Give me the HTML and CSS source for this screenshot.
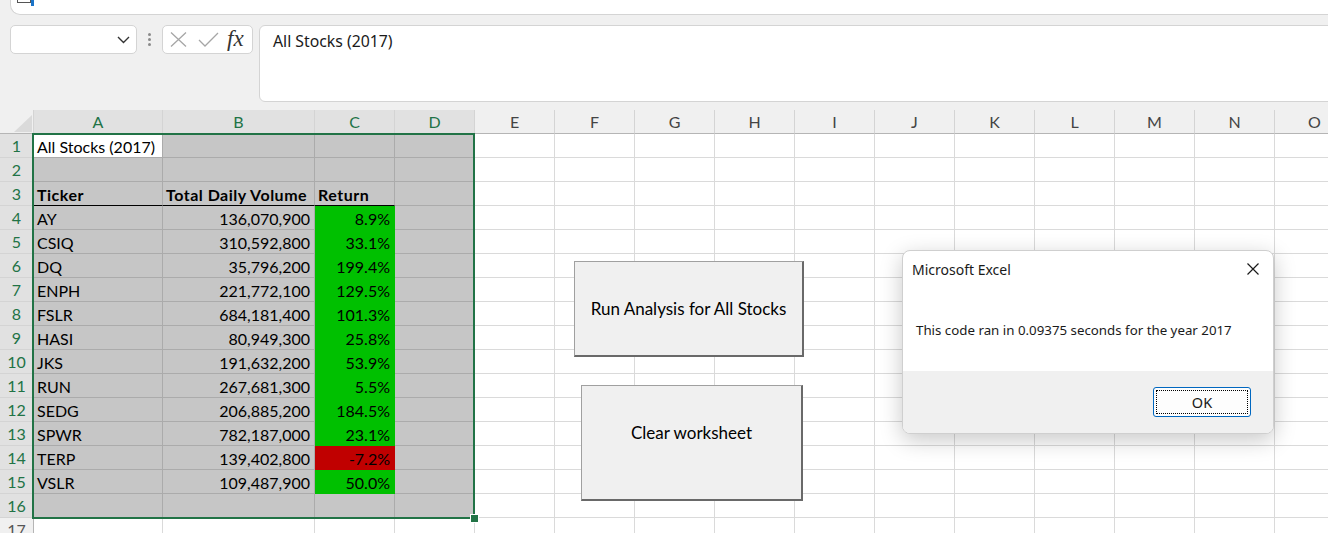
FILE: index.html
```html
<!DOCTYPE html>
<html>
<head>
<meta charset="utf-8">
<link rel="stylesheet" href="styles.css">
</head>
<body>
<div class="topbar">
  <span class="top-icon"><span class="ti-gray"></span><span class="ti-blue"></span></span>
</div>
<div class="fbar">
  <div class="namebox">
    <svg class="chev" width="13" height="8" viewBox="0 0 13 8"><polyline points="1,1 6.5,6.5 12,1" fill="none" stroke="#333" stroke-width="1.4"/></svg>
  </div>
  <div class="dots"><i></i><i></i><i></i></div>
  <div class="fxbox">
    <svg width="17" height="15" viewBox="0 0 17 15"><path d="M1 0.5 L16 14.5 M16 0.5 L1 14.5" stroke="#a6a6a6" stroke-width="1.3" fill="none"/></svg>
    <svg width="21" height="15" viewBox="0 0 21 15"><polyline points="1,8 7,14 20,1" fill="none" stroke="#a6a6a6" stroke-width="1.3"/></svg>
    <span class="fx">fx</span>
  </div>
  <div class="finput">All Stocks (2017)</div>
</div>

<div class="sheet">
  <div class="row head">
    <div class="rh corner"><span class="tri"></span></div>
    <div class="ch a on">A</div><div class="ch b on">B</div><div class="ch c on">C</div><div class="ch d on">D</div>
    <div class="ch e">E</div><div class="ch e">F</div><div class="ch e">G</div><div class="ch e">H</div><div class="ch e">I</div><div class="ch e">J</div><div class="ch e">K</div><div class="ch e">L</div><div class="ch e">M</div><div class="ch e">N</div><div class="ch e">O</div>
  </div>

  <div class="row"><div class="rh on">1</div><div class="cell a active">All Stocks (2017)</div><div class="cell b sel"></div><div class="cell c sel"></div><div class="cell d sel"></div><div class="rest"></div></div>
  <div class="row"><div class="rh on">2</div><div class="cell a sel"></div><div class="cell b sel"></div><div class="cell c sel"></div><div class="cell d sel"></div><div class="rest"></div></div>
  <div class="row"><div class="rh on">3</div><div class="cell a sel hd">Ticker</div><div class="cell b sel hd">Total Daily Volume</div><div class="cell c sel hd">Return</div><div class="cell d sel"></div><div class="rest"></div></div>
  <div class="row"><div class="rh on">4</div><div class="cell a sel">AY</div><div class="cell b sel num">136,070,900</div><div class="cell c num g">8.9%</div><div class="cell d sel"></div><div class="rest"></div></div>
  <div class="row"><div class="rh on">5</div><div class="cell a sel">CSIQ</div><div class="cell b sel num">310,592,800</div><div class="cell c num g">33.1%</div><div class="cell d sel"></div><div class="rest"></div></div>
  <div class="row"><div class="rh on">6</div><div class="cell a sel">DQ</div><div class="cell b sel num">35,796,200</div><div class="cell c num g">199.4%</div><div class="cell d sel"></div><div class="rest"></div></div>
  <div class="row"><div class="rh on">7</div><div class="cell a sel">ENPH</div><div class="cell b sel num">221,772,100</div><div class="cell c num g">129.5%</div><div class="cell d sel"></div><div class="rest"></div></div>
  <div class="row"><div class="rh on">8</div><div class="cell a sel">FSLR</div><div class="cell b sel num">684,181,400</div><div class="cell c num g">101.3%</div><div class="cell d sel"></div><div class="rest"></div></div>
  <div class="row"><div class="rh on">9</div><div class="cell a sel">HASI</div><div class="cell b sel num">80,949,300</div><div class="cell c num g">25.8%</div><div class="cell d sel"></div><div class="rest"></div></div>
  <div class="row"><div class="rh on">10</div><div class="cell a sel">JKS</div><div class="cell b sel num">191,632,200</div><div class="cell c num g">53.9%</div><div class="cell d sel"></div><div class="rest"></div></div>
  <div class="row"><div class="rh on">11</div><div class="cell a sel">RUN</div><div class="cell b sel num">267,681,300</div><div class="cell c num g">5.5%</div><div class="cell d sel"></div><div class="rest"></div></div>
  <div class="row"><div class="rh on">12</div><div class="cell a sel">SEDG</div><div class="cell b sel num">206,885,200</div><div class="cell c num g">184.5%</div><div class="cell d sel"></div><div class="rest"></div></div>
  <div class="row"><div class="rh on">13</div><div class="cell a sel">SPWR</div><div class="cell b sel num">782,187,000</div><div class="cell c num g">23.1%</div><div class="cell d sel"></div><div class="rest"></div></div>
  <div class="row"><div class="rh on">14</div><div class="cell a sel">TERP</div><div class="cell b sel num">139,402,800</div><div class="cell c num r">-7.2%</div><div class="cell d sel"></div><div class="rest"></div></div>
  <div class="row"><div class="rh on">15</div><div class="cell a sel">VSLR</div><div class="cell b sel num">109,487,900</div><div class="cell c num g">50.0%</div><div class="cell d sel"></div><div class="rest"></div></div>
  <div class="row"><div class="rh on">16</div><div class="cell a sel"></div><div class="cell b sel"></div><div class="cell c sel"></div><div class="cell d sel"></div><div class="rest"></div></div>
  <div class="row"><div class="rh">17</div><div class="cell a"></div><div class="cell b"></div><div class="cell c"></div><div class="cell d"></div><div class="rest"></div></div>

  <div class="selbox"><span class="handle"></span></div>

  <div class="xlbtn btn-run">Run Analysis for All Stocks</div>
  <div class="xlbtn btn-clear">Clear worksheet</div>

  <div class="dialog">
    <div class="dlg-title">
      <span>Microsoft Excel</span>
      <svg class="dlg-close" width="12" height="12" viewBox="0 0 12 12"><path d="M0.5 0.5 L11.5 11.5 M11.5 0.5 L0.5 11.5" stroke="#1a1a1a" stroke-width="1.2" fill="none"/></svg>
    </div>
    <div class="dlg-msg">This code ran in 0.09375 seconds for the year 2017</div>
    <div class="dlg-foot"><div class="okbtn"><span class="focus">OK</span></div></div>
  </div>
</div>
</body>
</html>
```
FILE: styles.css
```css
* { box-sizing: border-box; }
html, body { margin: 0; padding: 0; }
body {
  width: 1328px;
  height: 533px;
  overflow: hidden;
  background: #f0f0f0;
  font-family: Lato, "Noto Sans", sans-serif;
  font-size: 16px;
  color: #000;
}

/* ribbon tail */
.topbar {
  position: relative;
  height: 15px;
  margin-left: 10px;
  background: #fff;
  border-left: 1px solid #d4d4d4;
  border-bottom: 1px solid #d4d4d4;
  border-bottom-left-radius: 10px;
}
.top-icon { position: absolute; left: 6px; top: 0; display: flex; align-items: flex-start; }
.ti-gray { width: 14px; height: 3px; border: 1px solid #555; border-top: 0; }
.ti-blue { width: 3px; height: 6px; background: #1a73c8; }

/* formula bar */
.fbar {
  display: flex;
  align-items: flex-start;
  padding: 10px 0 0 10px;
  height: 95px;
}
.namebox {
  width: 127px;
  height: 29px;
  background: #fff;
  border: 1px solid #d4d4d4;
  border-radius: 5px;
  display: flex;
  align-items: center;
  justify-content: flex-end;
  padding-right: 6px;
}
.dots {
  width: 25px;
  height: 29px;
  display: flex;
  flex-direction: column;
  align-items: center;
  justify-content: center;
  gap: 2px;
}
.dots i { display: block; width: 3px; height: 3px; background: #8a8a8a; border-radius: 50%; }
.fxbox {
  width: 91px;
  height: 29px;
  background: #fff;
  border: 1px solid #d4d4d4;
  border-radius: 5px;
  display: flex;
  align-items: center;
  gap: 11px;
  padding-left: 7px;
}
.fx {
  font-family: "Liberation Serif", "DejaVu Serif", serif;
  font-style: italic;
  font-size: 23px;
  color: #333;
  line-height: 1;
  margin-left: -3px;
  margin-top: -2px;
}
.finput {
  flex: 1;
  margin-left: 6px;
  margin-right: -10px;
  height: 77px;
  background: #fff;
  border: 1px solid #d4d4d4;
  border-radius: 6px;
  padding: 4px 0 0 13px;
  font-family: "Noto Sans", "Open Sans", sans-serif;
  font-size: 15.8px;
  color: #1a1a1a;
}

/* sheet */
.sheet {
  position: relative;
  background: #fff;
}
.row { display: flex; height: 24px; }
.head { background: #f0f0f0; }
.rh {
  width: 34px;
  flex: none;
  background: #f0f0f0;
  border-right: 1px solid #b5b5b5;
  border-bottom: 1px solid #d4d4d4;
  text-align: center;
  line-height: 24px;
  color: #555;
  font-size: 16px;
}
.rh.on { background: #e1e1e1; color: #217346; }
.corner { position: relative; border-bottom: 1px solid #b5b5b5; border-right: 1px solid #d4d4d4; }
.tri {
  position: absolute;
  right: 1px;
  bottom: 1px;
  width: 18px;
  height: 17px;
  background: #dadada;
  clip-path: polygon(100% 0, 100% 100%, 0 100%);
}
.ch {
  flex: none;
  text-align: center;
  line-height: 24px;
  border-right: 1px solid #d4d4d4;
  border-bottom: 1px solid #b5b5b5;
  color: #444;
  font-size: 16px;
}
.ch.on { background: #e1e1e1; color: #217346; }
.a { width: 129px; flex: none; }
.b { width: 152px; flex: none; }
.c { width: 80px; flex: none; }
.d { width: 80px; flex: none; }
.e { width: 80px; }

.cell {
  border-right: 1px solid #dadada;
  border-bottom: 1px solid #dadada;
  line-height: 24px;
  padding: 1px 3px 0 3px;
  white-space: nowrap;
  overflow: hidden;
}
.sel { background: #c6c6c6; border-color: #ababab; }
.active { background: #fff; border-right-color: #ababab; border-bottom-color: #ababab; }
.hd { font-weight: 700; letter-spacing: 0.5px; border-bottom-color: #000; }
.num { text-align: right; padding-right: 4px; }
.g { background: #00c000; border-color: #00c000; }
.r { background: #c00000; border-color: #c00000; }
.rest {
  flex: 1;
  border-bottom: 1px solid #dadada;
  background-image: repeating-linear-gradient(to right, transparent 0 79px, #dadada 79px 80px);
}

.selbox {
  position: absolute;
  left: 32px;
  top: 23px;
  width: 443px;
  height: 386px;
  border: 2px solid #217346;
  pointer-events: none;
}
.handle {
  position: absolute;
  right: -5px;
  bottom: -5px;
  width: 7px;
  height: 7px;
  background: #217346;
  outline: 1px solid #fff;
}

/* form buttons */
.xlbtn {
  position: absolute;
  display: flex;
  align-items: center;
  justify-content: center;
  background: #f0f0f0;
  border-top: 1px solid #a0a0a0;
  border-left: 1px solid #a0a0a0;
  border-right: 2px solid #696969;
  border-bottom: 2px solid #696969;
  font-size: 17px;
  color: #000;
}
.btn-run { left: 574px; top: 151px; width: 230px; height: 96px; }
.btn-clear { left: 581px; top: 275px; width: 222px; height: 116px; padding-bottom: 21px; }

/* message box */
.dialog {
  position: absolute;
  left: 902px;
  top: 140px;
  width: 372px;
  height: 184px;
  background: #fff;
  border: 1px solid #cfcfcf;
  border-radius: 8px;
  box-shadow: 0 6px 22px rgba(0, 0, 0, 0.22);
  display: flex;
  flex-direction: column;
  overflow: hidden;
  font-family: "Noto Sans", "Open Sans", sans-serif;
  color: #1a1a1a;
}
.dlg-title {
  height: 38px;
  display: flex;
  align-items: center;
  justify-content: space-between;
  padding: 0 14px 2px 9px;
  font-size: 14px;
}
.dlg-msg {
  flex: 1;
  padding: 32px 0 0 13px;
  font-size: 13.3px;
}
.dlg-foot {
  height: 62px;
  background: #f0f0f0;
  display: flex;
  justify-content: flex-end;
  align-items: flex-start;
  padding: 16px 22px 0 0;
}
.okbtn {
  width: 98px;
  height: 30px;
  background: #fdfdfd;
  border: 1px solid #0067c0;
  border-radius: 3px;
  padding: 2px;
}
.focus {
  display: flex;
  align-items: center;
  justify-content: center;
  height: 100%;
  border: 1px dotted #000;
  font-size: 14.5px;
}
```
